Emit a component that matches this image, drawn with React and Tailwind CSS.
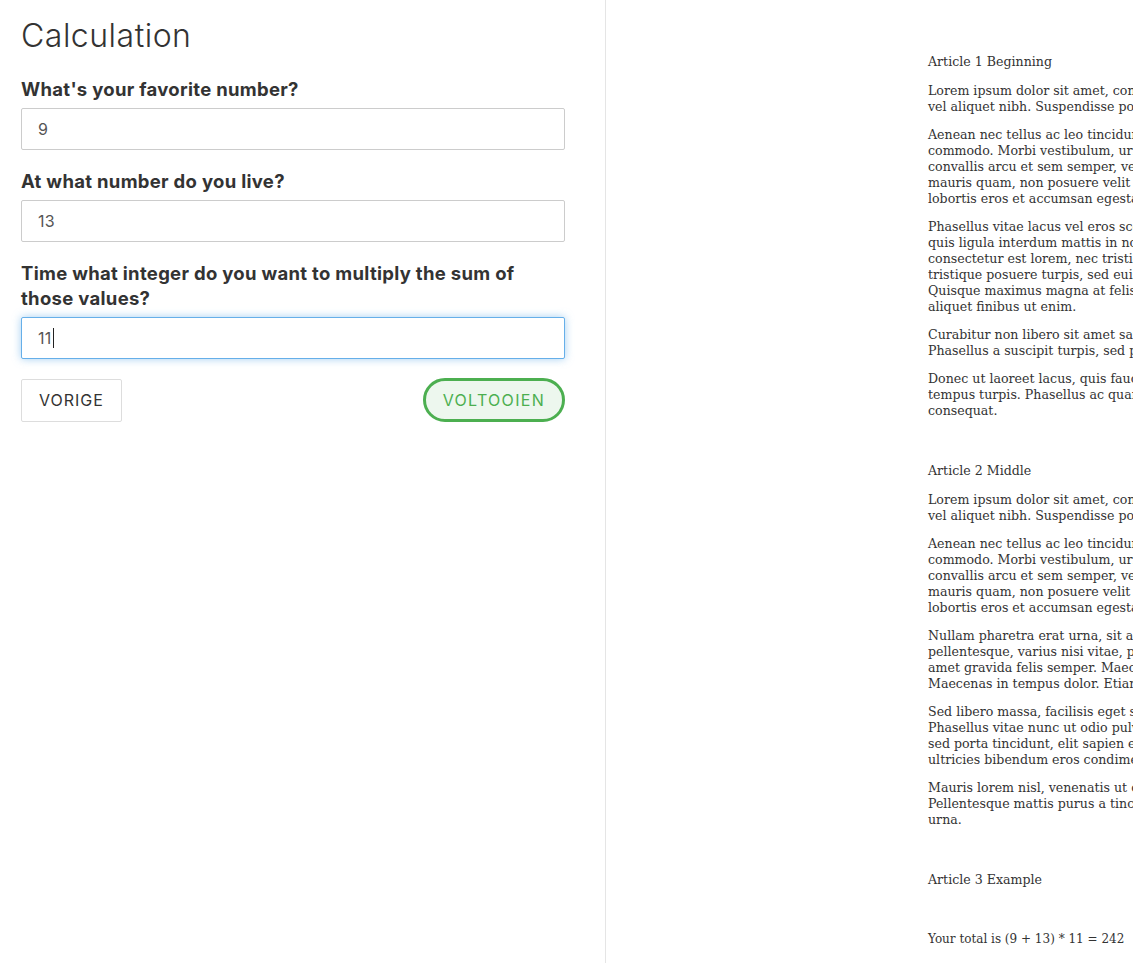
import React from "react";

const A1 = [
  [
    "Lorem ipsum dolor sit amet, consectetur adipiscing elit. Nulla facilisi. Donec",
    "vel aliquet nibh. Suspendisse potenti. Integer at turpis ut mi pharetra luctus.",
  ],
  [
    "Aenean nec tellus ac leo tincidunt ultrices. Sed vitae diam in lectus iaculis",
    "commodo. Morbi vestibulum, urna sed posuere tempor, tortor nisl faucibus ante,",
    "convallis arcu et sem semper, vel blandit nisi feugiat. Vivamus porttitor sed",
    "mauris quam, non posuere velit ultricies sit amet. Nullam faucibus dignissim",
    "lobortis eros et accumsan egestas.",
  ],
  [
    "Phasellus vitae lacus vel eros scelerisque faucibus. Pellentesque euismod sem",
    "quis ligula interdum mattis in non diam. Sed pharetra elementum nunc, donec",
    "consectetur est lorem, nec tristique metus ullamcorper in. Aliquam erat nunc,",
    "tristique posuere turpis, sed euismod lorem. Vestibulum ante ipsum primis in",
    "Quisque maximus magna at felis dapibus, nec pellentesque lorem semper. Cras",
    "aliquet finibus ut enim.",
  ],
  [
    "Curabitur non libero sit amet sapien rhoncus volutpat ac ut diam. Integer nec",
    "Phasellus a suscipit turpis, sed placerat lectus.",
  ],
  [
    "Donec ut laoreet lacus, quis faucibus justo. Cras eget metus ac sem aliquet",
    "tempus turpis. Phasellus ac quam sit amet nisl lacinia tincidunt sed vitae",
    "consequat.",
  ],
];

const A2 = [
  A1[0],
  A1[1],
  [
    "Nullam pharetra erat urna, sit amet sodales nisl mattis quis. Fusce vel mauris",
    "pellentesque, varius nisi vitae, pretium nulla. Ut commodo tortor, ut lorem sit",
    "amet gravida felis semper. Maecenas vel tellus nec augue gravida pulvinar.",
    "Maecenas in tempus dolor. Etiam sit amet pulvinar justo.",
  ],
  [
    "Sed libero massa, facilisis eget sapien nec, vehicula faucibus nulla. Aliquam",
    "Phasellus vitae nunc ut odio pulvinar aliquam. Praesent fringilla, nisl in",
    "sed porta tincidunt, elit sapien egestas nunc, ac placerat ipsum eros vitae",
    "ultricies bibendum eros condimentum sed.",
  ],
  [
    "Mauris lorem nisl, venenatis ut ornare quis, mollis et nibh. Nunc quis tempor",
    "Pellentesque mattis purus a tincidunt efficitur. Donec nec ligula vel ipsum",
    "urna.",
  ],
];

function Para({ lines }) {
  return (
    <div className="mb-3">
      {lines.map((l, i) => (
        <div key={i} className="whitespace-nowrap">
          {l}
        </div>
      ))}
    </div>
  );
}

function Field({ label, value, focused }) {
  return (
    <div className="mb-[19px]">
      <label className="block mb-[6px] text-[18.5px] leading-[25px] font-bold tracking-[0.3px] text-[#333]">
        {label}
      </label>
      <div
        className={
          "h-[42px] w-full rounded-[2px] border bg-white flex items-center pl-[16px] text-[16px] tracking-[0.3px] text-[#555] " +
          (focused
            ? "border-[#66afe9] shadow-[0_0_8px_rgba(102,175,233,0.6)]"
            : "border-[#ccc]")
        }
      >
        <span>{value}</span>
        {focused && <span className="inline-block w-px h-[20px] bg-[#222] ml-[1px]" />}
      </div>
    </div>
  );
}

export default function App() {
  return (
    <div className="flex h-[963px] w-[1133px] overflow-hidden bg-white">
      <div
        className="w-[606px] shrink-0 border-r border-[#e5e5e5] pl-[21px] pr-[40px] pt-[18px]"
        style={{ fontFamily: "Inter, 'Open Sans', sans-serif" }}
      >
        <h1 className="text-[32px] leading-[36px] font-light tracking-[0.5px] text-[#333] mb-[23px]">
          Calculation
        </h1>
        <Field label="What's your favorite number?" value="9" />
        <Field label="At what number do you live?" value="13" />
        <Field
          label={
            <>
              Time what integer do you want to multiply the sum of
              <br />
              those values?
            </>
          }
          value="11"
          focused
        />
        <div className="flex justify-between items-center">
          <button className="h-[43px] px-[17px] border border-[#ddd] rounded-[2px] bg-white text-[16px] text-[#333] tracking-[1px]">
            VORIGE
          </button>
          <button className="h-[44px] px-[17px] border-[3px] border-[#4caf50] rounded-full bg-[#edf7ee] text-[16px] text-[#4caf50] tracking-[1.3px]">
            VOLTOOIEN
          </button>
        </div>
      </div>
      <div
        className="flex-1 overflow-hidden pl-[322px] pt-[54px] text-[12.6px] leading-[16px] text-[#333]"
        style={{ fontFamily: "'DejaVu Serif', 'Liberation Serif', serif" }}
      >
        <div className="mb-[13px]">Article 1 Beginning</div>
        {A1.map((p, i) => (
          <Para key={i} lines={p} />
        ))}
        <div className="mt-[44px] mb-[13px]">Article 2 Middle</div>
        {A2.map((p, i) => (
          <Para key={i} lines={p} />
        ))}
        <div className="mt-[44px]">Article 3 Example</div>
        <div className="mt-[43px] whitespace-nowrap text-[12px]">Your total is (9 + 13) * 11 = 242</div>
      </div>
    </div>
  );
}
